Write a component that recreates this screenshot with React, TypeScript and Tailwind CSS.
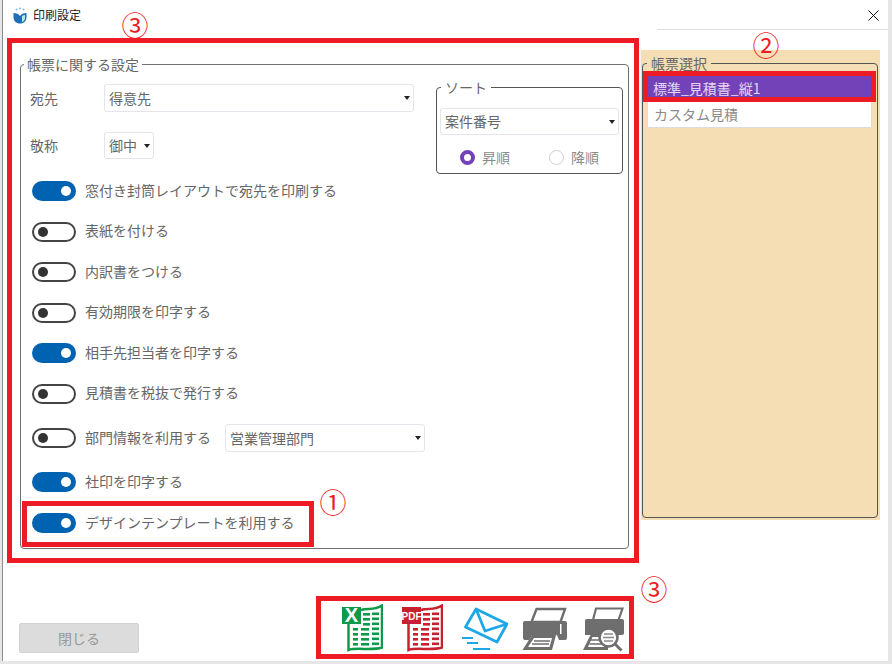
const FONT = "font-['Noto_Sans_CJK_JP','Noto_Sans',sans-serif]";

const TOGGLES = [
  { label: "窓付き封筒レイアウトで宛先を印刷する", on: true, row: "h-[40.5px]" },
  { label: "表紙を付ける", on: false, row: "h-[40.5px]" },
  { label: "内訳書をつける", on: false, row: "h-[40.5px]" },
  { label: "有効期限を印字する", on: false, row: "h-[40.5px]" },
  { label: "相手先担当者を印字する", on: true, row: "h-[40.5px]" },
  { label: "見積書を税抜で発行する", on: false, row: "h-[40.5px]" },
  { label: "部門情報を利用する", on: false, row: "h-[48.5px]", select: "営業管理部門" },
  { label: "社印を印字する", on: true, row: "h-[39.5px]" },
  { label: "デザインテンプレートを利用する", on: true, row: "h-[42.5px]" },
];

const Toggle = ({ on }: { on: boolean }) =>
  on ? (
    <div className="w-[44px] h-[20px] shrink-0 rounded-full bg-[#0063b1] flex items-center justify-end pr-[5px]">
      <div className="size-[10px] rounded-full bg-white" />
    </div>
  ) : (
    <div className="w-[44px] h-[20px] shrink-0 rounded-full border-2 border-[#444] bg-white flex items-center pl-[4px]">
      <div className="size-[10px] rounded-full bg-[#333]" />
    </div>
  );

const Select = ({ value, className }: { value: string; className: string }) => (
  <div
    className={`flex items-center justify-between pl-[4px] pr-[3px] bg-white border border-[#e3e5ea] rounded-[3px] text-[14px] text-[#666] ${className}`}
  >
    <span>{value}</span>
    <div className="w-0 h-0 border-x-[3.5px] border-x-transparent border-t-[4px] border-t-[#222]" />
  </div>
);

const Radio = ({ checked, label }: { checked: boolean; label: string }) => (
  <div className="flex items-center gap-[7px] text-[14px] text-[#8a8a8a] h-[16px]">
    {checked ? (
      <div className="size-[15px] rounded-full border-[4px] border-[#7442b8] bg-white" />
    ) : (
      <div className="size-[15px] rounded-full border-[1.5px] border-[#cfcfcf] bg-white" />
    )}
    <span>{label}</span>
  </div>
);

const Sheet = ({ color, tag, tagSize }: { color: string; tag: string; tagSize: number }) => {
  const rows = [9, 14, 19];
  const lower = [24, 29, 34, 39];
  return (
    <svg width="42" height="48" viewBox="0 0 42 48" className="shrink-0">
      <path
        d="M7.5 19 V46 C 16 43 30 47 41 43.5 V1.5 C 33 7 26 3.5 20 6"
        fill="none"
        stroke={color}
        strokeWidth="2.5"
      />
      {rows.map((y) => (
        <g key={y} fill={color}>
          <rect x="22" y={y} width="7" height="2.6" />
          <rect x="31" y={y - 0.5} width="7" height="2.6" />
        </g>
      ))}
      {lower.map((y) => (
        <g key={y} fill={color}>
          <rect x="12" y={y} width="5" height="2.6" />
          <rect x="20" y={y} width="8" height="2.6" />
          <rect x="31" y={y - 0.5} width="7" height="2.6" />
        </g>
      ))}
      <rect x="1" y="3" width="19" height="17" fill={color} />
      <text
        x="10.5"
        y={tag === "X" ? 18 : 15.5}
        textAnchor="middle"
        fill="#fff"
        fontFamily="'Liberation Sans', sans-serif"
        fontWeight="700"
        fontSize={tagSize}
      >
        {tag}
      </text>
    </svg>
  );
};

const MailIcon = () => (
  <svg width="46" height="48" viewBox="0 0 46 48" className="shrink-0">
    <g fill="none" stroke="#1ea7e6" strokeWidth="2.8" strokeLinejoin="round">
      <path d="M14 5 L45 20 L35 38 L3.5 23 Z" />
      <path d="M14 5 L23 27 L45 20" />
    </g>
    <g stroke="#1ea7e6" strokeWidth="2">
      <path d="M0 34 H11" />
      <path d="M5 39 H16" />
      <path d="M11 45 H28" />
    </g>
  </svg>
);

const PrinterIcon = () => (
  <svg width="47" height="48" viewBox="0 0 47 48" className="shrink-0">
    <path d="M15.5 5 H44 L39.5 18 H10.5 Z" fill="#fff" stroke="#6e6e6e" strokeWidth="2.4" />
    <path d="M4 17 H44 Q46 17 46 19 V34 Q46 36 44 36 H38 L36 31 H11 L8 36 H4 Q2 36 2 34 V19 Q2 17 4 17 Z" fill="#6e6e6e" />
    <rect x="39" y="20" width="1.5" height="10" fill="#fff" />
    <path d="M11 31 H35 L31 46 H1.5 Z" fill="#6e6e6e" />
    <path d="M13 34 H31 L28.5 43 H7 Z" fill="#fff" />
    <path d="M13 37 H29 M11 40 H28" stroke="#6e6e6e" strokeWidth="1.4" />
  </svg>
);

const PreviewIcon = () => (
  <svg width="43" height="48" viewBox="0 0 43 48" className="shrink-0">
    <path d="M13 4.5 H39.5 L35.5 16 H10 Z" fill="#fff" stroke="#6e6e6e" strokeWidth="2.2" />
    <path d="M4 15 H39 Q41 15 41 17 V29 Q41 31 39 31 H2 V17 Q2 15 4 15 Z" fill="#6e6e6e" />
    <path d="M8 30 H25 V46 H0 Z" fill="#6e6e6e" />
    <path d="M9.5 33 H22 V43 H5 Z" fill="#fff" />
    <path d="M8 36 H22 M6.5 40 H22" stroke="#6e6e6e" strokeWidth="1.4" />
    <circle cx="25.5" cy="33.5" r="9" fill="#fff" stroke="#6e6e6e" strokeWidth="2.6" />
    <path d="M21 30 H30 M20 33.5 H31 M21 37 H30" stroke="#8a8a8a" strokeWidth="1.6" />
    <path d="M32 40 L38.5 46.5" stroke="#6e6e6e" strokeWidth="2.8" />
  </svg>
);

const AppLogo = () => (
  <svg width="14" height="17" viewBox="0 0 14 17" className="shrink-0">
    <path d="M0.5 6 C3 6 6 7 7 9 V16.5 C3 16.5 0.5 14 0.5 10 Z" fill="#1f6fb5" />
    <path d="M13.5 6 C11 6 8 7 7 9 V16.5 C11 16.5 13.5 14 13.5 10 Z" fill="#1f6fb5" />
    <path d="M9 9 C10 8.5 11 8 12 8 V11 C12 13 10.5 14.5 9 15 Z" fill="#bfe6df" />
    <circle cx="3.5" cy="2.5" r="1" fill="#7fb8e0" />
    <circle cx="7" cy="1.5" r="1" fill="#7fb8e0" />
    <circle cx="10.5" cy="2.5" r="1" fill="#7fb8e0" />
  </svg>
);

const Callout = ({ className }: { className: string }) => (
  <div className={`absolute border-[5px] border-[#ed1c24] pointer-events-none ${className}`} />
);

const Mark = ({ children, className }: { children: string; className: string }) => (
  <div
    className={`absolute w-[30px] h-[30px] flex items-center justify-center text-[27px] leading-none text-[#ed1c24] ${className}`}
  >
    {children}
  </div>
);

export default function App() {
  return (
    <div className={`relative w-[892px] h-[664px] overflow-hidden bg-[#e6e6e6] ${FONT}`}>
      <div className="ml-[2px] w-[886px] h-[661px] bg-white border-l border-[#8c8c8c] flex flex-col">
        {/* title bar */}
        <div className="h-[30px] shrink-0 flex items-center pl-[10px] relative">
          <AppLogo />
          <span className="ml-[6px] text-[12px] text-[#222]">印刷設定</span>
          <svg width="11" height="11" viewBox="0 0 11 11" className="ml-auto mr-[9px]">
            <path d="M0.5 0.5 L10.5 10.5 M10.5 0.5 L0.5 10.5" stroke="#111" strokeWidth="1" />
          </svg>
          <div className="absolute right-0 bottom-0 w-[231px] h-px bg-[#dedede]" />
        </div>

        <div className="h-[566px] shrink-0 flex items-start pl-[17px]">
          {/* 帳票に関する設定 */}
          <fieldset className="mt-[24px] w-[609px] h-[495px] border border-[#707070] rounded-[4px] shrink-0">
            <legend className="ml-[3px] px-[3px] h-[20px] leading-[20px] text-[14px] text-[#666]">帳票に関する設定</legend>
            <div className="h-[97px] flex items-start">
              <div className="w-[393px] shrink-0 pl-[9px] pt-[10px] text-[14px] text-[#666]">
                <div className="flex items-center">
                  <span className="w-[74px]">宛先</span>
                  <Select value="得意先" className="w-[310px] h-[28px]" />
                </div>
                <div className="flex items-center mt-[20px]">
                  <span className="w-[74px]">敬称</span>
                  <Select value="御中" className="w-[50px] h-[27px]" />
                </div>
              </div>
              <fieldset className="ml-[22px] mt-[3px] w-[187px] h-[97px] border border-[#555] rounded-[4px] shrink-0 px-[3px]">
                <legend className="ml-[1px] px-[4px] h-[20px] leading-[20px] text-[14px] text-[#666]">ソート</legend>
                <Select value="案件番号" className="mt-[11px] w-[179px] h-[27px]" />
                <div className="mt-[14px] pl-[20px] flex gap-[39px]">
                  <Radio checked label="昇順" />
                  <Radio checked={false} label="降順" />
                </div>
              </fieldset>
            </div>
            <div className="flex flex-col pl-[11px]">
              {TOGGLES.map((t) => (
                <div key={t.label} className={`flex items-center ${t.row}`}>
                  <Toggle on={t.on} />
                  <span className="ml-[9px] mb-[2px] text-[14px] text-[#666] whitespace-nowrap">{t.label}</span>
                  {t.select && <Select value={t.select} className="ml-[14px] w-[200px] h-[28px]" />}
                </div>
              ))}
            </div>
          </fieldset>

          {/* 帳票選択 */}
          <div className="ml-[12px] mt-[20px] w-[239px] h-[470px] bg-[#f5deb3] shrink-0 pl-px pt-[3px]">
            <fieldset className="w-[236px] h-[465px] border border-[#555] rounded-[4px]">
              <legend className="ml-[4px] px-[4px] h-[20px] leading-[20px] text-[14px] text-[#666]">帳票選択</legend>
              <div className="mt-[3px] ml-[4px] w-[225px]">
                <div className="h-[25px] pl-[6px] flex items-center bg-[#7442b8] text-[14px] text-[#e3d8f2]">標準_見積書_縦1</div>
                <div className="h-[27px] pl-[6px] flex items-center bg-white border-b border-x border-[#dcdcdc] text-[14px] text-[#8a8a8a]">カスタム見積</div>
              </div>
            </fieldset>
          </div>
        </div>

        {/* bottom actions */}
        <div className="flex items-start pl-[16px]">
          <button className="mt-[27px] w-[120px] h-[30px] bg-[#dcdcdc] border border-[#d2d2d2] rounded-[2px] text-[14px] text-[#999] shrink-0">
            閉じる
          </button>
          <div className="ml-[202px] mt-[8px] flex">
            <Sheet color="#0f9a4a" tag="X" tagSize={20} />
            <div className="ml-[18px]">
              <Sheet color="#c8202f" tag="PDF" tagSize={10} />
            </div>
            <div className="ml-[19px]">
              <MailIcon />
            </div>
            <div className="ml-[13px]">
              <PrinterIcon />
            </div>
            <div className="ml-[15px]">
              <PreviewIcon />
            </div>
          </div>
        </div>
      </div>

      {/* red annotations over the screen */}
      <Callout className="left-[7px] top-[38px] w-[632px] h-[525px]" />
      <Callout className="left-[643px] top-[71px] w-[233px] h-[31px]" />
      <Callout className="left-[22px] top-[501px] w-[292px] h-[46px]" />
      <Callout className="left-[316px] top-[596px] w-[318px] h-[63px]" />
      <Mark className="left-[120px] top-[9px]">③</Mark>
      <Mark className="left-[751px] top-[29px]">②</Mark>
      <Mark className="left-[318px] top-[486px]">①</Mark>
      <Mark className="left-[639px] top-[573px]">③</Mark>
    </div>
  );
}
